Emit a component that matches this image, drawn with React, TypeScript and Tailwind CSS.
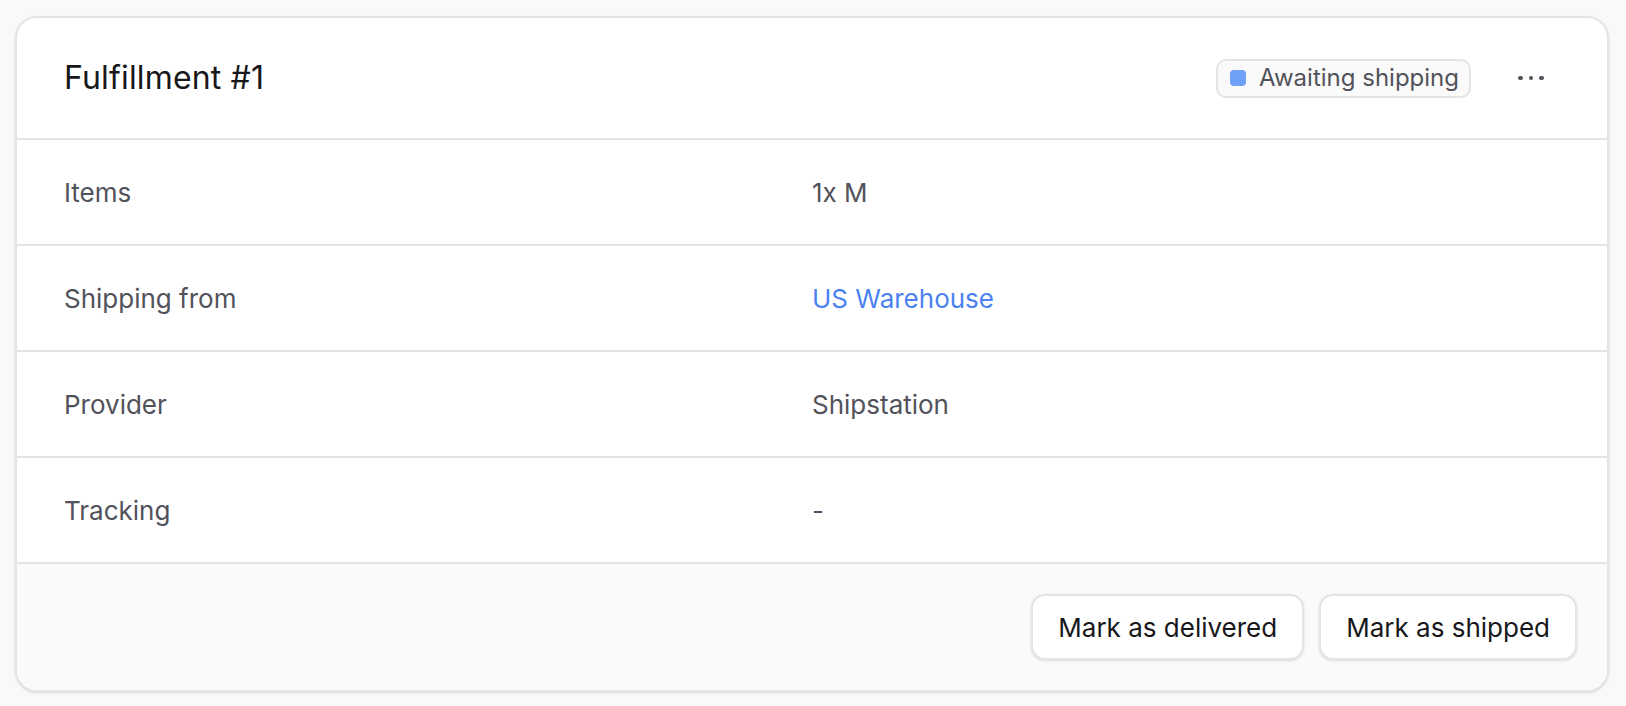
export default function App() {
  const rows: { label: string; value: string; link?: boolean }[] = [
    { label: "Items", value: "1x M" },
    { label: "Shipping from", value: "US Warehouse", link: true },
    { label: "Provider", value: "Shipstation" },
    { label: "Tracking", value: "-" },
  ];

  return (
    <div
      className="min-h-[706px] bg-[#f9f9f9] pl-[15px] pr-[17px] pt-[16px]"
      style={{ fontFamily: "Inter, 'Noto Sans', sans-serif" }}
    >
      <div className="overflow-hidden rounded-[22px] border-2 border-[#e4e4e7] bg-white shadow-sm">
        <div className="flex h-[120px] items-center justify-between pl-[47px] pr-[56px]">
          <h2 className="text-[32px] font-normal tracking-[0.005em] text-[#18181b]">Fulfillment #1</h2>
          <div className="flex items-center gap-[40px]">
            <span className="flex h-[39px] items-center gap-[13px] rounded-[10px] border-2 border-[#e4e4e7] bg-[#fafafa] pl-[12px] pr-[10px] text-[24px] text-[#52525b]">
              <span className="h-[16px] w-[16px] rounded-[4px] bg-[#6ea0f7]" />
              Awaiting shipping
            </span>
            <button className="flex h-[40px] w-[40px] items-center justify-center gap-[6px]">
              <span className="h-[4.5px] w-[4.5px] rounded-full bg-[#52525b]" />
              <span className="h-[4.5px] w-[4.5px] rounded-full bg-[#52525b]" />
              <span className="h-[4.5px] w-[4.5px] rounded-full bg-[#52525b]" />
            </button>
          </div>
        </div>
        {rows.map((row) => (
          <div
            key={row.label}
            className="grid h-[106px] grid-cols-2 items-center border-t-2 border-[#e4e4e7] px-[47px] text-[26px] text-[#52525b]"
          >
            <span>{row.label}</span>
            <span className={row.link ? "text-[#4b82f0]" : ""}>{row.value}</span>
          </div>
        ))}
        <div className="flex justify-end gap-[15px] border-t-2 border-[#e4e4e7] bg-[#fafafa] px-[30px] py-[30px]">
          <button className="h-[66px] rounded-[14px] border-2 border-[#e4e4e7] bg-white px-[25px] text-[26px] font-normal text-[#18181b] shadow-sm">
            Mark as delivered
          </button>
          <button className="h-[66px] rounded-[14px] border-2 border-[#e4e4e7] bg-white px-[25px] text-[26px] font-normal text-[#18181b] shadow-sm">
            Mark as shipped
          </button>
        </div>
      </div>
    </div>
  );
}
